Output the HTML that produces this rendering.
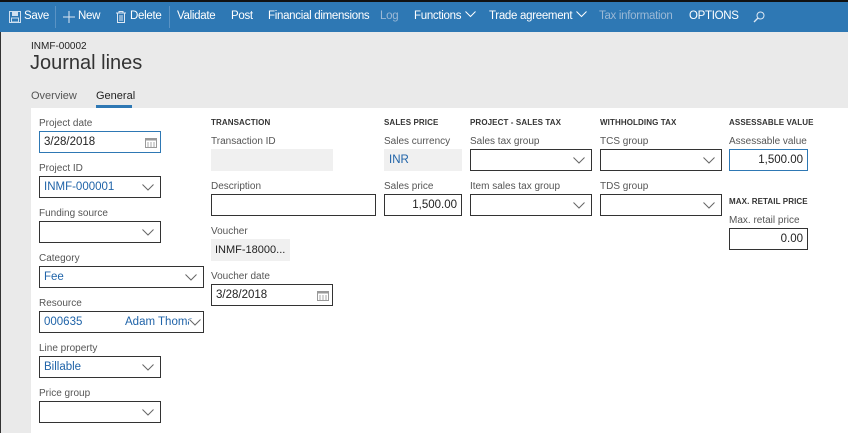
<!DOCTYPE html>
<html><head><meta charset="utf-8"><style>
*{margin:0;padding:0;box-sizing:border-box}
body{width:848px;height:433px;overflow:hidden;background:#eaeaea;font-family:"Liberation Sans",sans-serif;position:relative;color:#222}
.a{position:absolute;white-space:nowrap}
.tb{position:absolute;left:0;top:0;width:848px;height:2px;background:#111}
.bar{position:absolute;left:0;top:2px;width:848px;height:30px;background:#2e78b4}
.t{position:absolute;top:10px;color:#fff;font-size:11.5px;letter-spacing:-0.3px;white-space:nowrap}
.t svg{margin-left:4px;vertical-align:1px}
.g{color:#9bb9d6}
.sep{position:absolute;top:6px;width:1px;height:22px;background:#5a93c4}
.panel{position:absolute;left:31px;top:108px;width:817px;height:325px;background:#fff}
.lb{position:absolute;font-size:10px;color:#555;white-space:nowrap}
.hd{position:absolute;font-size:8px;font-weight:bold;color:#333;letter-spacing:.1px;white-space:nowrap}
.in{position:absolute;height:22px;border:1px solid #333;background:#fff;font-size:11.5px;line-height:20px;padding:0 4px;white-space:nowrap;overflow:hidden}
.ro{position:absolute;height:22px;background:#f0f0f0;font-size:11.5px;line-height:22px;padding:0 5px;white-space:nowrap;overflow:hidden}
.bl{color:#1f63a8}
.r{text-align:right}
.chev{position:absolute;right:6px;top:7px}
.cal{position:absolute;right:3px;top:5px}
</style></head><body>
<div class="tb"></div>
<div class="bar"></div>
<svg class="a" style="left:9px;top:11px" width="12" height="12" viewBox="0 0 12 12"><rect x="0.5" y="0.5" width="11" height="11" fill="none" stroke="#cfe0f0"/><rect x="3" y="1" width="6" height="4" fill="#cfe0f0"/><rect x="2.5" y="7" width="7" height="4" fill="none" stroke="#cfe0f0"/></svg>
<div class="t" style="left:24px">Save</div>
<div class="sep" style="left:55px"></div>
<svg class="a" style="left:63px;top:11px" width="12" height="12"><path d="M6 0V12M0 6H12" stroke="#dde8f3" stroke-width="1"/></svg>
<div class="t" style="left:78px">New</div>
<svg class="a" style="left:116px;top:11px" width="10" height="12"><path d="M0 2H10M3 2V0.5H7V2M1.5 2.5V11.5H8.5V2.5M4 4V10M6 4V10" stroke="#dde8f3" fill="none"/></svg>
<div class="t" style="left:130px">Delete</div>
<div class="sep" style="left:169px"></div>
<div class="t" style="left:177px">Validate</div>
<div class="t" style="left:231px">Post</div>
<div class="t" style="left:268px">Financial dimensions</div>
<div class="t g" style="left:380px">Log</div>
<div class="t" style="left:414px">Functions<svg width="11" height="7"><path d="M0.5 0.5L5.5 5.5L10.5 0.5" stroke="#fff" fill="none"/></svg></div>
<div class="t" style="left:489px">Trade agreement<svg width="11" height="7"><path d="M0.5 0.5L5.5 5.5L10.5 0.5" stroke="#fff" fill="none"/></svg></div>
<div class="t g" style="left:599px">Tax information</div>
<div class="t" style="left:689px">OPTIONS</div>
<svg class="a" style="left:753px;top:11px" width="12" height="12"><circle cx="7.5" cy="4.5" r="3.5" stroke="#dde8f3" fill="none"/><path d="M5 7L1 11" stroke="#dde8f3" stroke-width="1.3"/></svg>
<div class="a" style="left:0;top:32px;width:1px;height:401px;background:#333"></div>

<div class="a" style="left:31px;top:41px;font-size:10px;color:#222">INMF-00002</div>
<div class="a" style="left:30px;top:52px;font-size:20px;color:#333">Journal lines</div>
<div class="a" style="left:31px;top:90px;font-size:11px;color:#555">Overview</div>
<div class="a" style="left:96px;top:90px;font-size:11px;color:#222">General</div>
<div class="a" style="left:96px;top:105px;width:36px;height:3px;background:#2e78b4"></div>

<div class="panel"></div>
<!-- col1 -->
<div class="lb" style="left:39px;top:118px">Project date</div>
<div class="in" style="left:39px;top:131px;width:122px;border-color:#2e78b4">3/28/2018<svg class="cal" width="12" height="11"><rect x="0.5" y="1.5" width="11" height="9" fill="#fff" stroke="#999"/><rect x="0.5" y="1.5" width="11" height="2" fill="#999"/><path d="M3 5V10M6 5V10M9 5V10" stroke="#aaa"/></svg></div>
<div class="lb" style="left:39px;top:163px">Project ID</div>
<div class="in bl" style="left:39px;top:176px;width:122px">INMF-000001<svg class="chev" width="12" height="7"><path d="M0.5 0.5L6 6L11.5 0.5" stroke="#666" fill="none"/></svg></div>
<div class="lb" style="left:39px;top:208px">Funding source</div>
<div class="in" style="left:39px;top:221px;width:122px"><svg class="chev" width="12" height="7"><path d="M0.5 0.5L6 6L11.5 0.5" stroke="#666" fill="none"/></svg></div>
<div class="lb" style="left:39px;top:253px">Category</div>
<div class="in bl" style="left:39px;top:266px;width:165px">Fee<svg class="chev" width="12" height="7"><path d="M0.5 0.5L6 6L11.5 0.5" stroke="#666" fill="none"/></svg></div>
<div class="lb" style="left:39px;top:298px">Resource</div>
<div class="in bl" style="left:39px;top:311px;width:165px">000635<span class="a" style="left:85px;top:0">Adam Thoma</span><svg class="chev" style="right:2px;background:#fff" width="12" height="7"><path d="M0.5 0.5L6 6L11.5 0.5" stroke="#666" fill="none"/></svg></div>
<div class="lb" style="left:39px;top:343px">Line property</div>
<div class="in bl" style="left:39px;top:356px;width:122px">Billable<svg class="chev" width="12" height="7"><path d="M0.5 0.5L6 6L11.5 0.5" stroke="#666" fill="none"/></svg></div>
<div class="lb" style="left:39px;top:388px">Price group</div>
<div class="in" style="left:39px;top:401px;width:122px"><svg class="chev" width="12" height="7"><path d="M0.5 0.5L6 6L11.5 0.5" stroke="#666" fill="none"/></svg></div>
<!-- col2 -->
<div class="hd" style="left:211px;top:118px">TRANSACTION</div>
<div class="lb" style="left:211px;top:136px">Transaction ID</div>
<div class="ro" style="left:211px;top:149px;width:122px"></div>
<div class="lb" style="left:211px;top:181px">Description</div>
<div class="in" style="left:211px;top:194px;width:165px"></div>
<div class="lb" style="left:211px;top:226px">Voucher</div>
<div class="ro" style="left:211px;top:239px;width:79px;font-size:11px;padding:0 4px">INMF-18000...</div>
<div class="lb" style="left:211px;top:271px">Voucher date</div>
<div class="in" style="left:211px;top:284px;width:122px">3/28/2018<svg class="cal" width="12" height="11"><rect x="0.5" y="1.5" width="11" height="9" fill="#fff" stroke="#999"/><rect x="0.5" y="1.5" width="11" height="2" fill="#999"/><path d="M3 5V10M6 5V10M9 5V10" stroke="#aaa"/></svg></div>
<!-- col3 -->
<div class="hd" style="left:384px;top:118px">SALES PRICE</div>
<div class="lb" style="left:384px;top:136px">Sales currency</div>
<div class="ro bl" style="left:384px;top:149px;width:78px">INR</div>
<div class="lb" style="left:384px;top:181px">Sales price</div>
<div class="in r" style="left:384px;top:194px;width:78px">1,500.00</div>
<!-- col4 -->
<div class="hd" style="left:470px;top:118px">PROJECT - SALES TAX</div>
<div class="lb" style="left:470px;top:136px">Sales tax group</div>
<div class="in" style="left:470px;top:149px;width:122px"><svg class="chev" width="12" height="7"><path d="M0.5 0.5L6 6L11.5 0.5" stroke="#666" fill="none"/></svg></div>
<div class="lb" style="left:470px;top:181px">Item sales tax group</div>
<div class="in" style="left:470px;top:194px;width:122px"><svg class="chev" width="12" height="7"><path d="M0.5 0.5L6 6L11.5 0.5" stroke="#666" fill="none"/></svg></div>
<!-- col5 -->
<div class="hd" style="left:600px;top:118px">WITHHOLDING TAX</div>
<div class="lb" style="left:600px;top:136px">TCS group</div>
<div class="in" style="left:600px;top:149px;width:122px"><svg class="chev" width="12" height="7"><path d="M0.5 0.5L6 6L11.5 0.5" stroke="#666" fill="none"/></svg></div>
<div class="lb" style="left:600px;top:181px">TDS group</div>
<div class="in" style="left:600px;top:194px;width:122px"><svg class="chev" width="12" height="7"><path d="M0.5 0.5L6 6L11.5 0.5" stroke="#666" fill="none"/></svg></div>
<!-- col6 -->
<div class="hd" style="left:729px;top:118px">ASSESSABLE VALUE</div>
<div class="lb" style="left:729px;top:136px">Assessable value</div>
<div class="in r" style="left:729px;top:149px;width:79px;border-color:#2e78b4">1,500.00</div>
<div class="hd" style="left:729px;top:197px">MAX. RETAIL PRICE</div>
<div class="lb" style="left:729px;top:215px">Max. retail price</div>
<div class="in r" style="left:729px;top:228px;width:79px">0.00</div>
</body></html>
